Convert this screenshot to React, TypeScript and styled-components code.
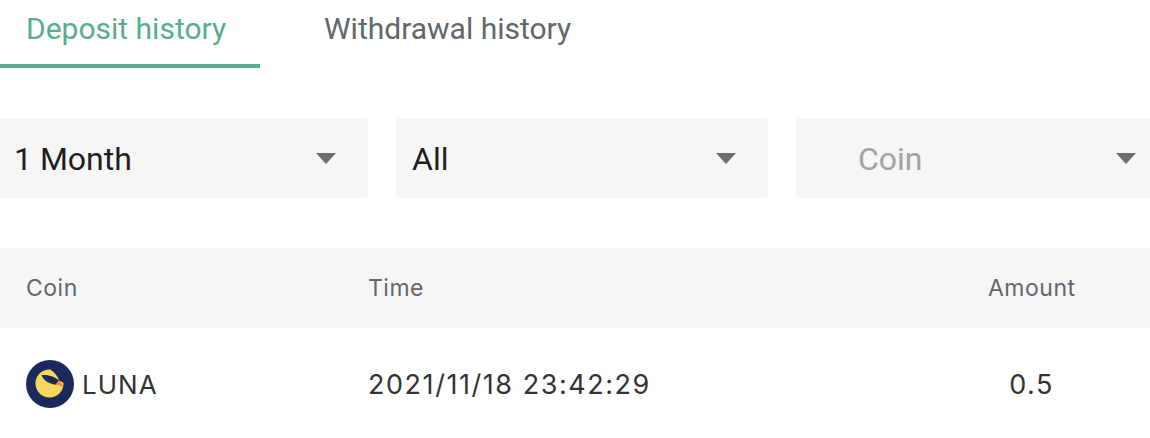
import React from "react";
import styled, { createGlobalStyle } from "styled-components";

const GlobalStyle = createGlobalStyle`
    html, body {
        margin: 0;
        padding: 0;
        background: #fff;
    }
    body {
        font-family: Roboto, "Liberation Sans", sans-serif;
        overflow: hidden;
    }
`;

const App = () => {
    return (
        <Page>
            <GlobalStyle />

            <Tabs>
                <Tab $active>Deposit history</Tab>
                <Tab>Withdrawal history</Tab>
            </Tabs>

            <Filters>
                <Select $left={18}>
                    <SelectValue>1 Month</SelectValue>
                    <Caret />
                </Select>
                <Select $left={16}>
                    <SelectValue>All</SelectValue>
                    <Caret />
                </Select>
                <Select $left={62}>
                    <SelectValue $muted>Coin</SelectValue>
                    <Caret />
                </Select>
            </Filters>

            <HeaderRow>
                <CoinCol>Coin</CoinCol>
                <TimeCol>Time</TimeCol>
                <AmountCol>Amount</AmountCol>
            </HeaderRow>

            <BodyRow>
                <CoinCol>
                    <LunaIcon />
                    LUNA
                </CoinCol>
                <TimeCol $wide>2021/11/18 23:42:29</TimeCol>
                <AmountCol $wide>0.5</AmountCol>
            </BodyRow>
        </Page>
    );
};

const LunaIcon = () => (
    <CoinLogo viewBox="0 0 48 48">
        <circle cx="24" cy="24" r="24" fill="#1a2a5c" />
        <circle cx="23.5" cy="23.5" r="14" fill="#f9d65c" />
        <path d="M33 20.500C32 16.500 29 12.500 24.500 9.700L30 5L42 15L40 24Z" fill="#1a2a5c" />
        <path d="M15.500 15C21 14.500 28 16 33 20.500L30 24.800C24 24 18 21.500 15.500 15Z" fill="#1a2a5c" />
        <path d="M33 20.500C35 22.500 36.500 24.500 37.200 27C34.500 25.800 32 25.300 29.500 24.600Z" fill="#ef8a3c" />
    </CoinLogo>
);

const Page = styled.div`
    width: 1150px;
    height: 438px;
    overflow: hidden;
    background: #fff;
`;

const Tabs = styled.div`
    display: flex;
    height: 68px;
`;

const Tab = styled.div<{ $active?: boolean }>`
    width: 260px;
    box-sizing: border-box;
    padding: 11px 0 0 26px;
    margin-right: ${(p) => (p.$active ? "38px" : "0")};
    font-size: 30px;
    line-height: 36px;
    white-space: nowrap;
    color: ${(p) => (p.$active ? "#58ad8d" : "#62666e")};
    border-bottom: 4px solid ${(p) => (p.$active ? "#58ad8d" : "transparent")};
`;

const Filters = styled.div`
    display: flex;
    gap: 28px;
    margin: 50px 0 0 -4px;
`;

const Select = styled.div<{ $left: number }>`
    flex: 0 0 372px;
    height: 80px;
    box-sizing: border-box;
    padding: 2px 32px 0 ${(p) => p.$left}px;
    display: flex;
    align-items: center;
    justify-content: space-between;
    background: #f6f6f6;
    border-radius: 4px;
`;

const SelectValue = styled.span<{ $muted?: boolean }>`
    font-size: 32px;
    color: ${(p) => (p.$muted ? "#a3a3a3" : "#1f1f1f")};
`;

const Caret = styled.i`
    width: 0;
    height: 0;
    margin-bottom: 2px;
    border-left: 10px solid transparent;
    border-right: 10px solid transparent;
    border-top: 11px solid #6e6e6e;
`;

const HeaderRow = styled.div`
    display: flex;
    align-items: center;
    height: 80px;
    margin-top: 50px;
    background: #f6f6f7;
    color: #62666e;
    font-family: Inter, Roboto, sans-serif;
    font-size: 23px;
    letter-spacing: 0.5px;
`;

const BodyRow = styled.div`
    display: flex;
    align-items: center;
    height: 110px;
    padding-top: 2px;
    box-sizing: border-box;
    color: #333;
    font-family: Inter, Roboto, sans-serif;
    font-size: 26px;
    letter-spacing: 1px;
`;

const CoinCol = styled.div`
    width: 342px;
    margin-left: 26px;
    display: flex;
    align-items: center;
    gap: 8px;
`;

const TimeCol = styled.div<{ $wide?: boolean }>`
    width: 620px;
    ${(p) => p.$wide && "font-size: 27px; letter-spacing: 1.55px;"}
`;

const AmountCol = styled.div<{ $wide?: boolean }>`
    width: 87px;
    text-align: center;
    white-space: nowrap;
    ${(p) => p.$wide && "font-size: 27px; letter-spacing: 1.5px;"}
`;

const CoinLogo = styled.svg`
    width: 48px;
    height: 48px;
    flex: none;
`;

export default App;
